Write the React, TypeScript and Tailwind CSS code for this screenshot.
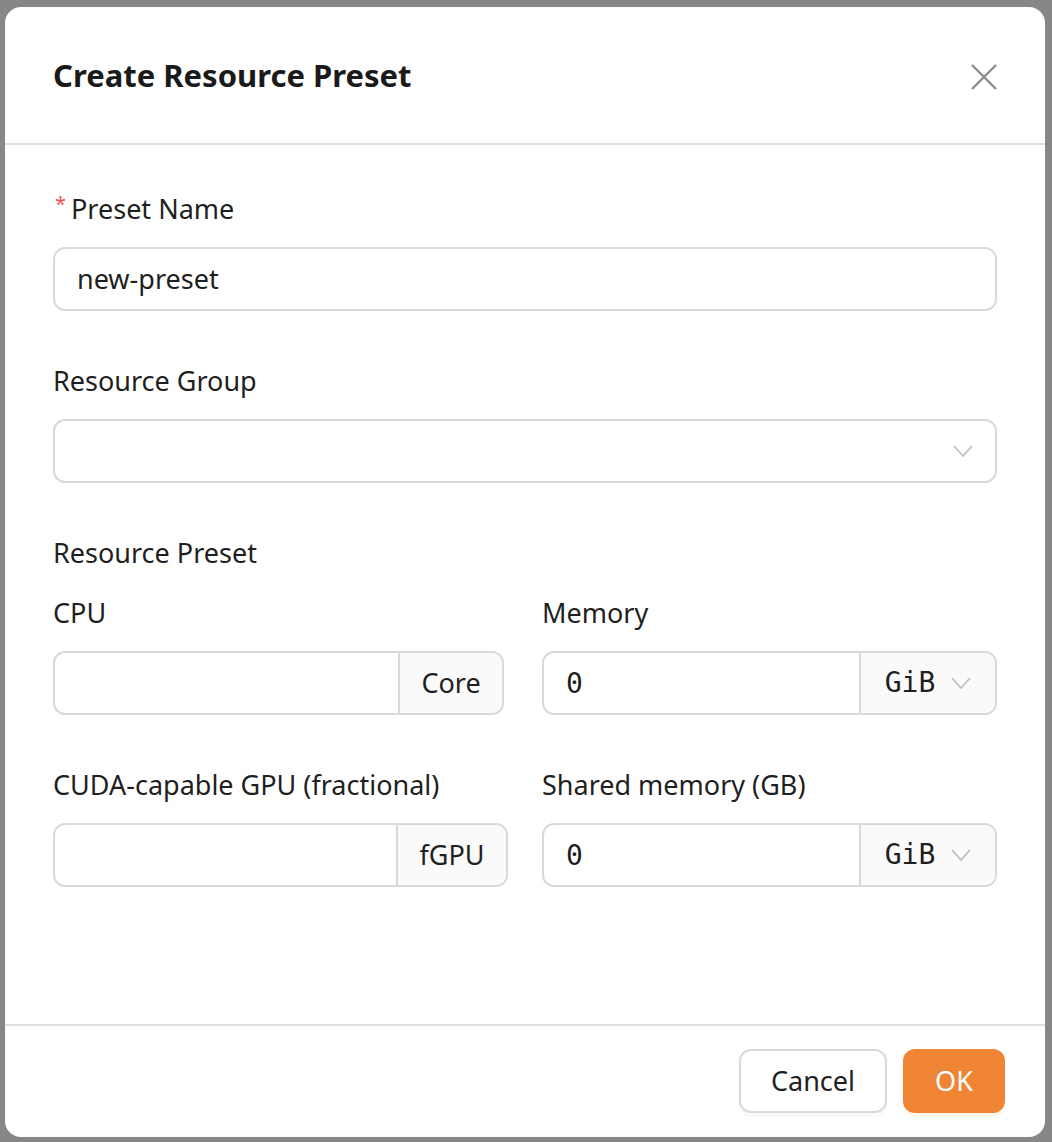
import React from 'react';

const Chevron: React.FC<{ className?: string }> = ({ className }) => (
  <svg className={className} width="20" height="12" viewBox="0 0 20 12" fill="none">
    <path d="M1 1 L10 11 L19 1" stroke="#bfbfbf" strokeWidth="1.8" strokeLinejoin="round" />
  </svg>
);

const Label: React.FC<{ text: string; required?: boolean }> = ({ text, required }) => (
  <div className="h-[44px] leading-[44px] mb-[16px] text-[27px] text-[#1f1f1f] flex items-center">
    {required && <span className="text-[#ff4d4f] text-[20px] mr-[5px] -mt-[10px] ml-[2px]">*</span>}
    {text}
  </div>
);

const NumberWithAddon: React.FC<{ value?: string; unit: string; inputW: string; select?: boolean }> = ({
  value,
  unit,
  inputW,
  select,
}) => (
  <div className="flex h-[64px] border-2 border-[#d9d9d9] rounded-[12px] overflow-hidden">
    <div className={`${inputW} flex items-center pl-[22px] pt-[2px] text-[28px] text-[#1f1f1f] font-['DejaVu_Sans_Mono',monospace]`}>
      {value}
    </div>
    <div className="flex-1 flex items-center justify-center bg-[#fafafa] border-l-2 border-[#d9d9d9] text-[27px] text-[#1f1f1f]">
      {select ? (
        <div className="flex items-center gap-[16px] font-['DejaVu_Sans_Mono',monospace] text-[28px]">
          <span>{unit}</span>
          <Chevron />
        </div>
      ) : (
        unit
      )}
    </div>
  </div>
);

export default function App() {
  return (
    <div className="relative w-full h-[1142px] bg-[#878787] overflow-hidden font-['Noto_Sans',sans-serif]">
      <div className="absolute left-[5px] top-[7px] w-[1040px] h-[1130px] rounded-[16px] bg-white flex flex-col">
        {/* header */}
        <div className="h-[138px] border-b-2 border-[#e0e0e0] flex items-center justify-between pl-[48px] pr-[48px]">
          <h1 className="text-[31px] font-bold text-[#1a1a1a]">Create Resource Preset</h1>
          <svg width="26" height="26" viewBox="0 0 26 26" fill="none" className="mt-[4px]">
            <path d="M1 1 L25 25 M25 1 L1 25" stroke="#8c8c8c" strokeWidth="2.4" />
          </svg>
        </div>

        {/* body */}
        <div className="flex-1 px-[48px] pt-[42px]">
          <div className="mb-[48px]">
            <Label text="Preset Name" required />
            <div className="h-[64px] border-2 border-[#d9d9d9] rounded-[12px] flex items-center pl-[22px] text-[27px] text-[#1f1f1f]">
              new-preset
            </div>
          </div>

          <div className="mb-[48px]">
            <Label text="Resource Group" />
            <div className="h-[64px] border-2 border-[#d9d9d9] rounded-[12px] flex items-center justify-end pr-[22px]">
              <Chevron />
            </div>
          </div>

          <Label text="Resource Preset" />

          <div className="grid grid-cols-2 gap-x-[34px]">
            <div className="mb-[48px]">
              <Label text="CPU" />
              <div className="w-[451px]">
                <NumberWithAddon unit="Core" inputW="w-[343px]" />
              </div>
            </div>
            <div className="mb-[48px]">
              <Label text="Memory" />
              <NumberWithAddon value="0" unit="GiB" inputW="w-[315px]" select />
            </div>
            <div>
              <Label text="CUDA-capable GPU (fractional)" />
              <NumberWithAddon unit="fGPU" inputW="w-[341px]" />
            </div>
            <div>
              <Label text="Shared memory (GB)" />
              <NumberWithAddon value="0" unit="GiB" inputW="w-[315px]" select />
            </div>
          </div>
        </div>

        {/* footer */}
        <div className="border-t-2 border-[#e0e0e0] flex justify-end items-center gap-[16px] pr-[40px] pt-[23px] pb-[24px]">
          <button className="w-[148px] h-[64px] rounded-[12px] border-2 border-[#d9d9d9] bg-white text-[27px] text-[#1f1f1f] shadow-[0_4px_0_rgba(0,0,0,0.02)]">
            Cancel
          </button>
          <button className="w-[102px] h-[64px] rounded-[12px] bg-[#ef8434] text-[27px] text-white shadow-[0_4px_0_rgba(255,140,40,0.08)]">
            OK
          </button>
        </div>
      </div>
    </div>
  );
}
